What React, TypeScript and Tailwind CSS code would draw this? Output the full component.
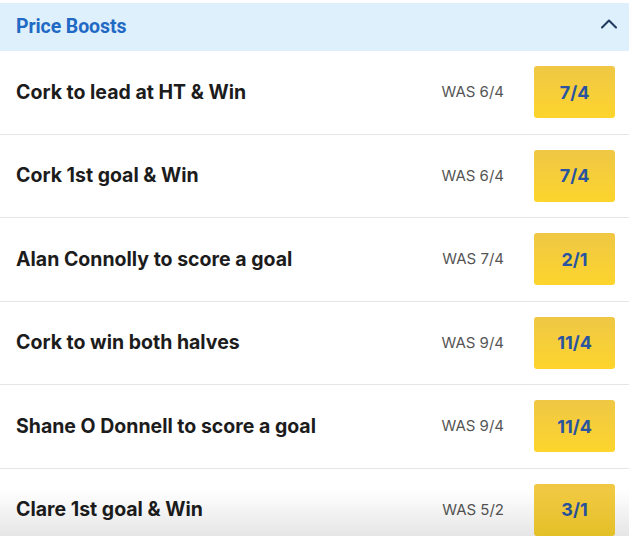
import { ChevronUp } from 'lucide-react'

type Boost = { id: string; title: string; was: string; odds: string }

const boosts: Boost[] = [
  { id: 'b1', title: 'Cork to lead at HT & Win', was: '6/4', odds: '7/4' },
  { id: 'b2', title: 'Cork 1st goal & Win', was: '6/4', odds: '7/4' },
  { id: 'b3', title: 'Alan Connolly to score a goal', was: '7/4', odds: '2/1' },
  { id: 'b4', title: 'Cork to win both halves', was: '9/4', odds: '11/4' },
  { id: 'b5', title: 'Shane O Donnell to score a goal', was: '9/4', odds: '11/4' },
  { id: 'b6', title: 'Clare 1st goal & Win', was: '5/2', odds: '3/1' },
]

export default function App() {
  return (
    <div className="relative h-[536px] w-[629px] overflow-hidden bg-white pt-[3px] font-['Roboto',sans-serif]">
      {/* Header */}
      <div className="flex h-[48px] items-center justify-between bg-[#dff0fd] pl-4 pr-[6px]">
        <h2 className="text-[19.5px] font-bold tracking-[-0.1px] text-[#1f6ac4]">Price Boosts</h2>
        <ChevronUp className="mb-[7px] h-7 w-7 text-[#1f3a5c]" strokeWidth={1.8} />
      </div>

      {/* Rows */}
      <div>
        {boosts.map((b) => (
          <div
            key={b.id}
            className="flex h-[83.5px] items-center border-b border-[#e6e6e6] pl-4 pr-[14px] font-['Inter',sans-serif]"
          >
            <span className="flex-1 text-[19.5px] font-bold text-[#1c1c1c]">{b.title}</span>
            <span className="mr-[30px] text-[15px] text-[#555]">WAS {b.was}</span>
            <button
              type="button"
              className="flex h-[52px] w-[81px] items-center justify-center rounded-[3px] bg-gradient-to-b from-[#efc744] to-[#fdd52b] text-[18px] font-bold text-[#2a54a0]"
            >
              {b.odds}
            </button>
          </div>
        ))}
      </div>

      {/* bottom fade */}
      <div className="pointer-events-none absolute inset-x-0 bottom-0 h-[46px] bg-gradient-to-b from-transparent to-black/10" />
    </div>
  )
}
